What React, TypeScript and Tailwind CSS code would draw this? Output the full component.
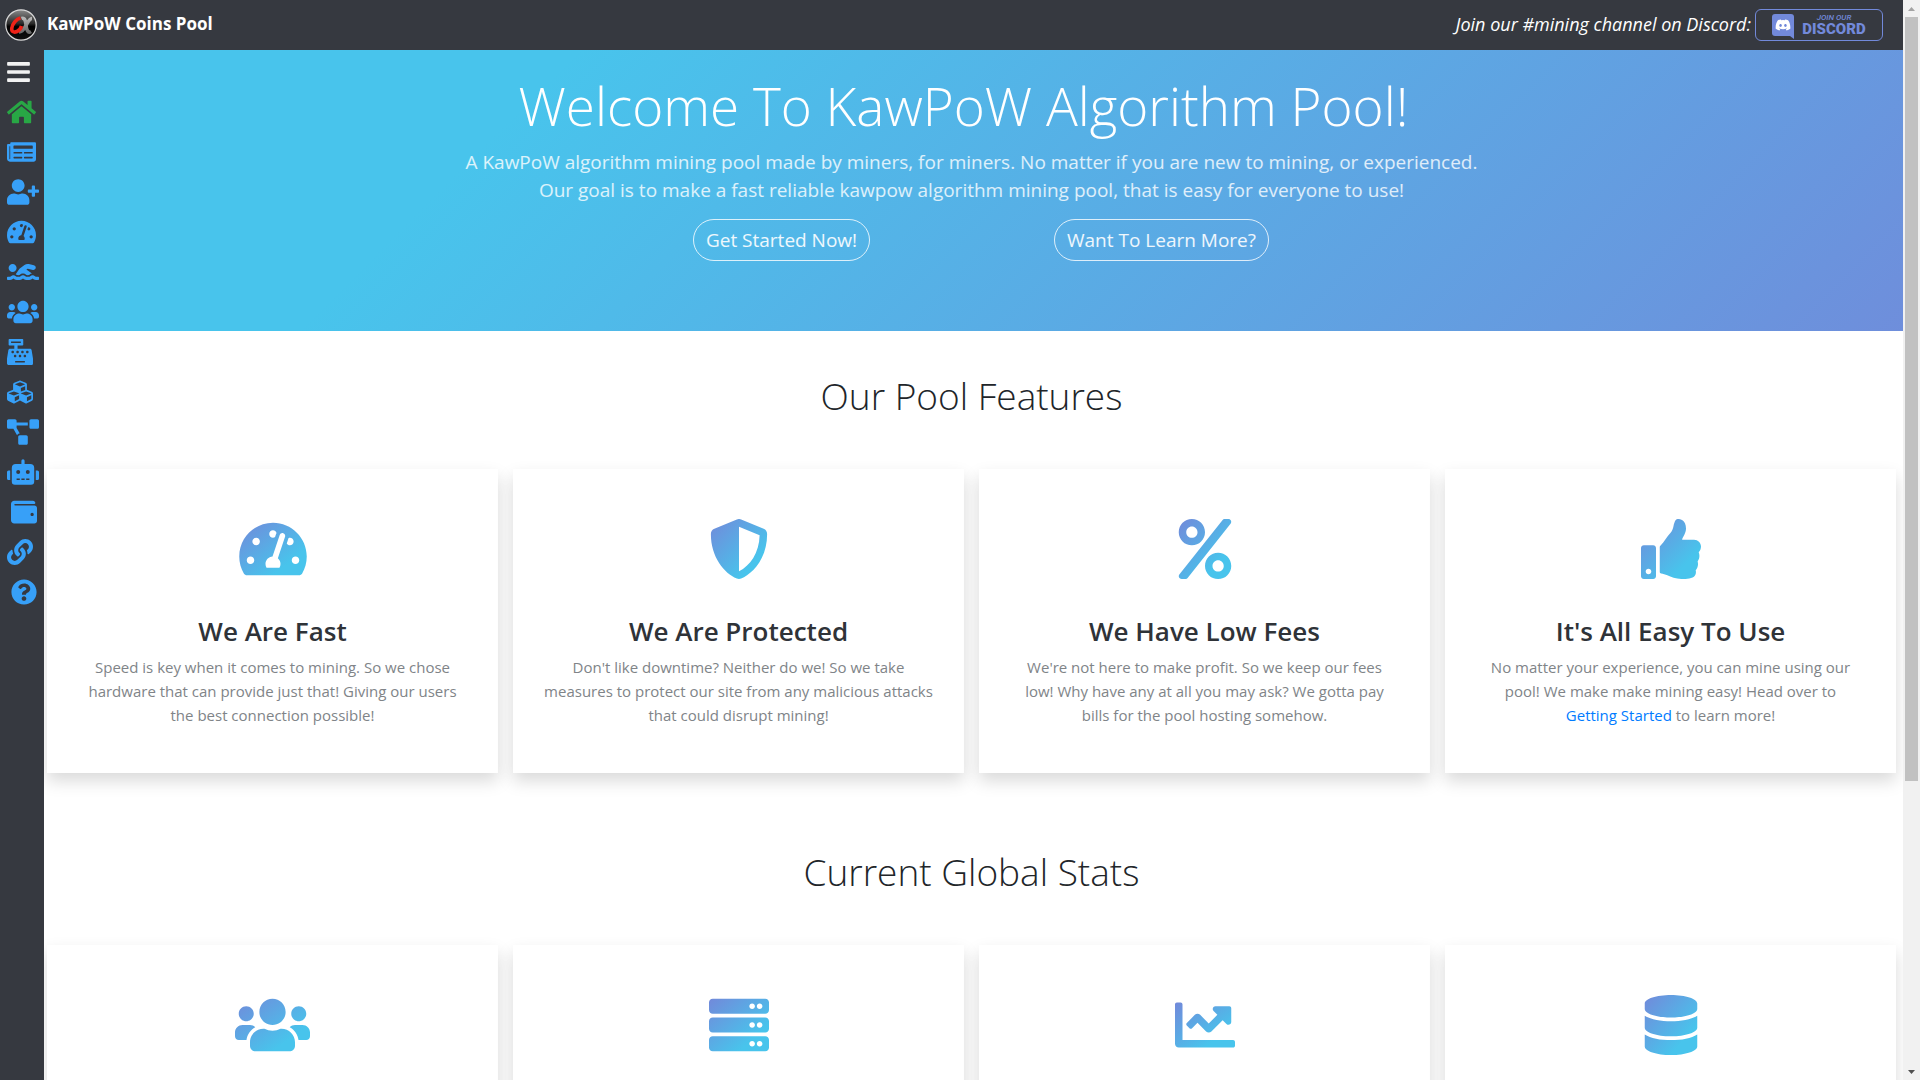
import type { ReactNode } from "react";
import type { IconType } from "react-icons";
import {
  FaBars, FaHome, FaNewspaper, FaUserPlus, FaTachometerAlt, FaSwimmer, FaUsers, FaCashRegister,
  FaCubes, FaProjectDiagram, FaRobot, FaWallet, FaLink, FaQuestionCircle, FaShieldAlt, FaPercent,
  FaThumbsUp, FaServer, FaChartLine, FaDatabase, FaDiscord,
} from "react-icons/fa";

const NAV: { label: string; icon: IconType; size: string; tone: string }[] = [
  { label: "Home", icon: FaHome, size: "w-[29px]", tone: "pl-[7px] text-[#28a745]" },
  { label: "News", icon: FaNewspaper, size: "w-[29px]", tone: "pl-[7px] text-[#37a0f8]" },
  { label: "Getting Started", icon: FaUserPlus, size: "w-8", tone: "pl-[7px] text-[#37a0f8]" },
  { label: "Dashboard", icon: FaTachometerAlt, size: "w-[29px]", tone: "pl-[7px] text-[#37a0f8]" },
  { label: "Pools", icon: FaSwimmer, size: "w-8", tone: "pl-[7px] text-[#37a0f8]" },
  { label: "Miners", icon: FaUsers, size: "w-8", tone: "pl-[7px] text-[#37a0f8]" },
  { label: "Payments", icon: FaCashRegister, size: "w-[26px]", tone: "pl-[7px] text-[#37a0f8]" },
  { label: "Blocks", icon: FaCubes, size: "w-[26px]", tone: "pl-[7px] text-[#37a0f8]" },
  { label: "Network", icon: FaProjectDiagram, size: "w-8", tone: "pl-[7px] text-[#37a0f8]" },
  { label: "API", icon: FaRobot, size: "w-8", tone: "pl-[7px] text-[#37a0f8]" },
  { label: "Wallet", icon: FaWallet, size: "w-[26px]", tone: "pl-[11px] text-[#37a0f8]" },
  { label: "Links", icon: FaLink, size: "w-[26px]", tone: "pl-[7px] text-[#37a0f8]" },
  { label: "Help", icon: FaQuestionCircle, size: "w-[26px]", tone: "pl-[11px] text-[#37a0f8]" },
];

const FEATURES: { icon: IconType; size: string; title: string; text: ReactNode }[] = [
  {
    icon: FaTachometerAlt,
    size: "w-[68px]",
    title: "We Are Fast",
    text: (
      <>
        Speed is key when it comes to mining. So we chose hardware that can provide just that! Giving our users
        <br />
        the best connection possible!
      </>
    ),
  },
  {
    icon: FaShieldAlt,
    size: "w-[60px]",
    title: "We Are Protected",
    text: "Don't like downtime? Neither do we! So we take measures to protect our site from any malicious attacks that could disrupt mining!",
  },
  {
    icon: FaPercent,
    size: "w-[60px]",
    title: "We Have Low Fees",
    text: (
      <>
        We're not here to make profit. So we keep our fees
        <br />
        low! Why have any at all you may ask? We gotta pay
        <br />
        bills for the pool hosting somehow.
      </>
    ),
  },
  {
    icon: FaThumbsUp,
    size: "w-[60px]",
    title: "It's All Easy To Use",
    text: (
      <>
        No matter your experience, you can mine using our pool! We make make mining easy! Head over to
        <br />
        <a href="#start" className="text-[#007bff]">Getting Started</a> to learn more!
      </>
    ),
  },
];

const STATS: { icon: IconType; size: string; label: string }[] = [
  { icon: FaUsers, size: "w-[75px]", label: "Miners" },
  { icon: FaServer, size: "w-[60px]", label: "Workers" },
  { icon: FaChartLine, size: "w-[60px]", label: "Hashrate" },
  { icon: FaDatabase, size: "w-[60px]", label: "Blocks" },
];

function Logo() {
  return (
    <svg viewBox="0 0 32 32" className="size-8" aria-hidden="true">
      <defs>
        <linearGradient id="logo-bg" x1="0" y1="0" x2="0" y2="1">
          <stop offset="0" stopColor="#8a8a8a" />
          <stop offset="0.45" stopColor="#2a2a2a" />
          <stop offset="0.55" stopColor="#000" />
          <stop offset="1" stopColor="#111" />
        </linearGradient>
        <linearGradient id="logo-x" x1="0" y1="0" x2="0" y2="1">
          <stop offset="0" stopColor="#b5b5b5" />
          <stop offset="1" stopColor="#6a6a6a" />
        </linearGradient>
      </defs>
      <circle cx="16" cy="16" r="15.200" fill="url(#logo-bg)" stroke="#d9d9d9" strokeWidth="1.2" />
      <path d="M16.500 9.500 C19 8.500 20.500 10 21 16 C21.500 21.500 23 24.500 26 22.500 M27 9.500 C24 9.500 22 15 20 18 C18.500 21 17 23 14 23" fill="none" stroke="url(#logo-x)" strokeWidth="3.600" />
      <path d="M15.500 9 C11 10 7.500 15 6.800 19 C6.300 22.500 8.500 24 12 22.500 C14.500 21.400 16 19 16.500 17" fill="none" stroke="#ef2318" strokeWidth="3.600" />
    </svg>
  );
}

function DiscordBadge() {
  return (
    <a
      href="#discord"
      aria-label="Join our Discord"
      className="flex h-8 w-32 items-center justify-center gap-2 rounded-md border border-[#7289da] text-[#7289da]"
    >
      <span className="relative flex h-[22px] w-[22px] items-center justify-center rounded-[3px] bg-[#7289da]">
        <FaDiscord className="size-4 text-white" />
        <svg viewBox="0 0 8 6" className="absolute -bottom-[3px] right-0 h-1.5 w-2" aria-hidden="true">
          <path d="M1 0H8V6L4 3Z" fill="#7289da" />
        </svg>
      </span>
      <span className="flex flex-col items-center font-[Roboto,sans-serif]">
        <span className="text-[8px] leading-[7px] font-medium italic">JOIN OUR</span>
        <span className="text-[15px] leading-4 font-black">DISCORD</span>
      </span>
    </a>
  );
}

function Card({ icon: Icon, size, children }: { icon: IconType; size: string; children?: ReactNode }) {
  return (
    <article className="flex h-[304px] flex-col items-center bg-white px-7 pt-[50px] text-center shadow-[0_8px_16px_rgba(0,0,0,0.15)]">
      <Icon className={`h-[60px] ${size}`} fill="url(#icon-gradient)" aria-hidden="true" />
      {children}
    </article>
  );
}

function Scrollbar() {
  return (
    <div className="flex w-[17px] shrink-0 flex-col items-center bg-[#f1f1f1]" aria-hidden="true">
      <svg viewBox="0 0 17 17" className="size-[17px]"><path d="M5 11h7L8.500 7z" fill="#a3a3a3" /></svg>
      <div className="flex w-[13px] flex-1 flex-col">
        <div className="h-[73%] bg-[#c1c1c1]" />
      </div>
      <svg viewBox="0 0 17 17" className="size-[17px]"><path d="M5 7h7L8.500 11z" fill="#505050" /></svg>
    </div>
  );
}

export default function App() {
  return (
    <div className="flex h-screen overflow-hidden bg-white font-['Open_Sans','Noto_Sans',sans-serif] text-[#212529]">
      <svg className="absolute size-0" aria-hidden="true">
        <defs>
          <linearGradient id="icon-gradient" x1="0" y1="0" x2="1" y2="1">
            <stop offset="0" stopColor="#7289da" />
            <stop offset="0.75" stopColor="#48c4ec" />
            <stop offset="1" stopColor="#48c4ec" />
          </linearGradient>
        </defs>
      </svg>
      <div className="flex min-w-0 flex-1 flex-col">
        <header className="flex h-[50px] shrink-0 items-center justify-between bg-[#363940] pr-5 pl-[5px] text-white">
          <a href="#home" className="flex items-center gap-2.5 text-[17px] font-bold">
            <Logo />
            <span className="pb-0.5">KawPoW Coins Pool</span>
          </a>
          <div className="flex items-center gap-1 text-[18px]">
            <em className="pb-0.5">Join our #mining channel on Discord:</em>
            <DiscordBadge />
          </div>
        </header>
        <div className="flex min-h-0 flex-1">
          <nav className="w-11 shrink-0 bg-[#363940] pt-0.5">
            <button type="button" aria-label="Menu" className="flex h-10 w-full items-center pl-[7px] text-[#f2f2f2]">
              <FaBars className="h-[26px] w-[23px]" />
            </button>
            <ul>
              {NAV.map(({ label, icon: Icon, size, tone }) => (
                <li key={label}>
                  <a href="#nav" aria-label={label} className={`flex h-10 items-center ${tone}`}>
                    <Icon className={`h-[26px] shrink-0 ${size}`} />
                  </a>
                </li>
              ))}
            </ul>
          </nav>
          <main className="min-w-0 flex-1 overflow-hidden">
            <section className="h-[281px] bg-[linear-gradient(135deg,#48c4ec_25%,#7289da_107%)] pt-4 pr-1 text-center text-white">
              <h1 className="pr-4 text-[53px] leading-[80px] font-light">Welcome To KawPoW Algorithm Pool!</h1>
              <p className="mt-0.5 text-[19px] leading-7 text-white/80">
                A KawPoW algorithm mining pool made by miners, for miners. No matter if you are new to mining, or experienced.
                <br />
                Our goal is to make a fast reliable kawpow algorithm mining pool, that is easy for everyone to use!
              </p>
              <div className="mx-auto mt-[15px] grid w-[760px] grid-cols-2 justify-items-center text-[19px] text-white/90">
                <a href="#start" className="flex h-[42px] items-center rounded-full border border-white/80 px-3">Get Started Now!</a>
                <a href="#learn" className="flex h-[42px] items-center rounded-full border border-white/80 px-3">Want To Learn More?</a>
              </div>
            </section>
            <section className="pr-[7px] pl-[3px]">
              <h2 className="pt-8 pb-10 text-center text-[37px] leading-[66px] font-light">Our Pool Features</h2>
              <div className="grid grid-cols-4 gap-[15px]">
                {FEATURES.map(({ icon, size, title, text }) => (
                  <Card key={title} icon={icon} size={size}>
                    <h3 className="mt-9 text-[26px] leading-8 font-semibold text-[#2f3338]">{title}</h3>
                    <p className="mt-2 text-[15px] leading-6 text-[#808488]">{text}</p>
                  </Card>
                ))}
              </div>
            </section>
            <section className="mt-[34px] pr-[7px] pl-[3px]">
              <h2 className="pt-8 pb-10 text-center text-[37px] leading-[66px] font-light">Current Global Stats</h2>
              <div className="grid grid-cols-4 gap-[15px]">
                {STATS.map(({ icon, size, label }) => (
                  <Card key={label} icon={icon} size={size} />
                ))}
              </div>
            </section>
          </main>
        </div>
      </div>
      <Scrollbar />
    </div>
  );
}
